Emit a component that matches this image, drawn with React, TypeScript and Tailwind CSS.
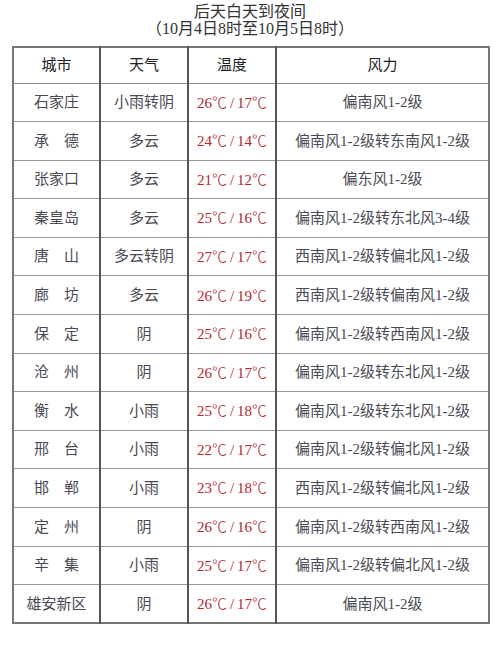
import React from "react";

type Row = {
	city: string;
	weather: string;
	temp: string;
	wind: string;
};

const rows: Row[] = [
	{ city: "石家庄", weather: "小雨转阴", temp: "26℃/17℃", wind: "偏南风1-2级" },
	{ city: "承　德", weather: "多云", temp: "24℃/14℃", wind: "偏南风1-2级转东南风1-2级" },
	{ city: "张家口", weather: "多云", temp: "21℃/12℃", wind: "偏东风1-2级" },
	{ city: "秦皇岛", weather: "多云", temp: "25℃/16℃", wind: "偏南风1-2级转东北风3-4级" },
	{ city: "唐　山", weather: "多云转阴", temp: "27℃/17℃", wind: "西南风1-2级转偏北风1-2级" },
	{ city: "廊　坊", weather: "多云", temp: "26℃/19℃", wind: "西南风1-2级转偏南风1-2级" },
	{ city: "保　定", weather: "阴", temp: "25℃/16℃", wind: "偏南风1-2级转西南风1-2级" },
	{ city: "沧　州", weather: "阴", temp: "26℃/17℃", wind: "偏南风1-2级转东北风1-2级" },
	{ city: "衡　水", weather: "小雨", temp: "25℃/18℃", wind: "偏南风1-2级转东北风1-2级" },
	{ city: "邢　台", weather: "小雨", temp: "22℃/17℃", wind: "偏南风1-2级转偏北风1-2级" },
	{ city: "邯　郸", weather: "小雨", temp: "23℃/18℃", wind: "西南风1-2级转偏北风1-2级" },
	{ city: "定　州", weather: "阴", temp: "26℃/16℃", wind: "偏南风1-2级转西南风1-2级" },
	{ city: "辛　集", weather: "小雨", temp: "25℃/17℃", wind: "偏南风1-2级转偏北风1-2级" },
	{ city: "雄安新区", weather: "阴", temp: "26℃/17℃", wind: "偏南风1-2级" },
];

const font = {
	fontFamily: '"Liberation Serif", "Noto Sans CJK SC", serif',
};

// ℃ and / are drawn wide in the original, so give them the CJK face
function Temp({ value }: { value: string }) {
	const [hi, lo] = value.replace(/℃/g, "").split("/");
	return (
		<>
			{hi}
			<span className="font-['Noto_Sans_CJK_SC'] font-light">℃</span>
			<span className="px-[3px]">/</span>
			{lo}
			<span className="font-['Noto_Sans_CJK_SC'] font-light">℃</span>
		</>
	);
}

export default function App() {
	return (
		<div
			className="w-[500px] h-[646px] bg-white text-[#4a4a55] overflow-hidden"
			style={font}>
			{/* Title */}
			<div className="pt-[3px] text-center text-[16px] leading-[17px] text-[#333]">
				<div>后天白天到夜间</div>
				<div>（10月4日8时至10月5日8时）</div>
			</div>

			{/* Table */}
			<div className="mt-[9px] ml-[12px] w-[478px]">
				<table className="w-full border-collapse table-fixed border-2 border-[#777] text-[15px]">
					<colgroup>
						<col className="w-[87px]" />
						<col className="w-[88px]" />
						<col className="w-[88px]" />
						<col />
					</colgroup>
					<thead>
						<tr className="h-[36px] text-[#222]">
							<th className="font-normal border-r-2 border-b border-[#888] border-r-[#555]">城市</th>
							<th className="font-normal border-r-2 border-b border-[#888] border-r-[#555]">天气</th>
							<th className="font-normal border-r-2 border-b border-[#888] border-r-[#555]">温度</th>
							<th className="font-normal border-b border-[#888]">风力</th>
						</tr>
					</thead>
					<tbody>
						{rows.map((r, i) => (
							<tr key={i} className="h-[38.6px]">
								<td className="text-center whitespace-nowrap border-r-2 border-b border-[#999] border-r-[#555]">
									{r.city}
								</td>
								<td className="text-center whitespace-nowrap border-r-2 border-b border-[#999] border-r-[#555]">
									{r.weather}
								</td>
								<td className="text-center whitespace-nowrap text-[#b0282e] border-r-2 border-b border-[#999] border-r-[#555]">
									<Temp value={r.temp} />
								</td>
								<td className="text-center whitespace-nowrap border-b border-[#999]">
									{r.wind}
								</td>
							</tr>
						))}
					</tbody>
				</table>
			</div>
		</div>
	);
}
